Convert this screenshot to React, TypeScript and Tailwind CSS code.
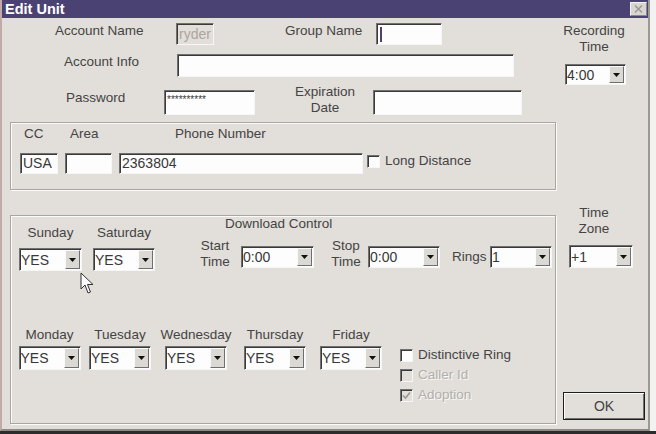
import React from 'react'

const sunken =
	'border border-t-[#707070] border-l-[#707070] border-b-[#f6f6f6] border-r-[#f6f6f6] shadow-[inset_1px_1px_0_#3a3a3a]'

function TextBox({ w, h, value, disabled, caret, small }: { w: string; h: string; value?: string; disabled?: boolean; caret?: boolean; small?: boolean }) {
	return (
		<div
			className={`${w} ${h} ${sunken} ${disabled ? 'bg-[#e2ded9] text-[#aaa6a2]' : 'bg-[#fdfdfd] text-[#383838]'} flex items-center pl-[2px] ${small ? 'text-[10px] leading-none pb-[6px]' : 'text-[14px]'}`}
		>
			{caret && <span className="w-[2px] h-[15px] bg-[#4b4274] ml-[1px]" />}
			{value}
		</div>
	)
}

function Select({ w, h, value }: { w: string; h: string; value: string }) {
	return (
		<div className={`${w} ${h} ${sunken} bg-[#fdfdfd] flex shrink-0`}>
			<span className="flex-1 self-center pl-[1px] text-[14px] text-[#383838] leading-none">{value}</span>
			<div className="w-[15px] my-[1px] mr-[1px] bg-[#dcd8d3] border border-t-[#fafafa] border-l-[#fafafa] border-b-[#6e6e6e] border-r-[#6e6e6e] flex items-center justify-center">
				<svg width="7" height="4" viewBox="0 0 7 4">
					<polygon points="0,0 7,0 3.5,4" fill="#111" />
				</svg>
			</div>
		</div>
	)
}

function Check({ checked, disabled }: { checked?: boolean; disabled?: boolean }) {
	return (
		<div className={`w-[13px] h-[13px] shrink-0 ${sunken} ${disabled ? 'bg-[#e2ded9]' : 'bg-[#fdfdfd]'} flex items-center justify-center`}>
			{checked && (
				<svg width="9" height="9" viewBox="0 0 9 9">
					<path d="M1 4.5 L3.5 7 L8 1.5" stroke="#9a9692" strokeWidth="1.6" fill="none" />
				</svg>
			)}
		</div>
	)
}

function DayCol({ label, ml, w }: { label: string; ml: string; w: string }) {
	return (
		<div className={`${ml} ${w} flex flex-col items-center shrink-0`}>
			<span className="leading-[16px] whitespace-nowrap">{label}</span>
			<div className="mt-[3px]">
				<Select w="w-[62px]" h="h-[24px]" value="YES" />
			</div>
		</div>
	)
}

export default function App() {
	return (
		<div className="w-[656px] h-[434px] bg-[#f3f2f0] flex flex-col overflow-hidden font-['Liberation_Sans',Arial,sans-serif] text-[13.5px] text-[#444]">
			<div className="w-[650px] h-[431px] flex flex-col bg-[#e2ded9] border-l-2 border-l-[#c4a9a9] border-r-2 border-r-[#9c9894] border-b-2 border-b-[#8e8a86]">
				{/* title bar */}
				<div className="h-[18px] bg-[#4b4274] flex items-center justify-between pl-[3px] pr-[1px]">
					<span className="text-white font-bold text-[14.5px] leading-none">Edit Unit</span>
					<div className="w-[17px] h-[14px] bg-[#d9d5d1] border border-t-[#f4f4f4] border-l-[#f4f4f4] border-b-[#8a8a8a] border-r-[#8a8a8a] flex items-center justify-center">
						<svg width="9" height="8" viewBox="0 0 9 8">
							<path d="M1 0.5 L8 7.5 M8 0.5 L1 7.5" stroke="#9a9692" strokeWidth="1.4" />
						</svg>
					</div>
				</div>

				<div className="flex-1 flex">
					{/* left side */}
					<div className="w-[554px] flex flex-col">
						<div className="mt-[5px] flex items-start h-[22px]">
							<span className="ml-[53px] w-[121px] leading-[16px]">Account Name</span>
							<TextBox w="w-[38px]" h="h-[22px]" value="ryder" disabled />
							<span className="ml-[71px] w-[91px] leading-[16px]">Group Name</span>
							<TextBox w="w-[66px]" h="h-[22px]" caret />
						</div>

						<div className="mt-[9px] flex items-start h-[23px]">
							<span className="ml-[62px] w-[113px] leading-[15px]">Account Info</span>
							<TextBox w="w-[337px]" h="h-[23px]" />
						</div>

						<div className="mt-[13px] flex items-start h-[25px]">
							<span className="ml-[64px] w-[98px] leading-[16px]">Password</span>
							<TextBox w="w-[91px]" h="h-[25px]" value="**********" small />
							<span className="ml-[35px] w-[70px] mt-[-6px] leading-[16px] text-center">
								Expiration
								<br />
								Date
							</span>
							<div className="ml-[13px]">
								<TextBox w="w-[149px]" h="h-[25px]" />
							</div>
						</div>

						{/* phone group */}
						<div className="mt-[7px] ml-[8px] w-[546px] h-[68px] border border-[#a9a5a0] shadow-[inset_1px_1px_0_#fbfbfb,1px_1px_0_#fbfbfb] flex flex-col">
							<div className="mt-[3px] flex leading-[16px]">
								<span className="ml-[13px] w-[46px]">CC</span>
								<span className="w-[105px]">Area</span>
								<span>Phone Number</span>
							</div>
							<div className="mt-[11px] flex items-center">
								<div className="ml-[9px]">
									<TextBox w="w-[38px]" h="h-[21px]" value="USA" />
								</div>
								<div className="ml-[7px]">
									<TextBox w="w-[47px]" h="h-[21px]" />
								</div>
								<div className="ml-[7px]">
									<TextBox w="w-[244px]" h="h-[21px]" value="2363804" />
								</div>
								<div className="ml-[4px] mt-[-4px]">
									<Check />
								</div>
								<span className="ml-[5px] mt-[-4px]">Long Distance</span>
							</div>
						</div>

						{/* schedule group */}
						<div className="relative mt-[25px] ml-[8px] w-[546px] h-[209px] border border-[#a9a5a0] shadow-[inset_1px_1px_0_#fbfbfb,1px_1px_0_#fbfbfb] flex flex-col">
							<div className="flex items-start">
								<div className="ml-[8px] w-[63px] mt-[9px] flex flex-col items-center">
									<span className="leading-[16px]">Sunday</span>
									<div className="mt-[7px]">
										<Select w="w-[63px]" h="h-[23px]" value="YES" />
									</div>
								</div>
								<div className="ml-[11px] w-[62px] mt-[9px] flex flex-col items-center">
									<span className="leading-[16px]">Saturday</span>
									<div className="mt-[7px]">
										<Select w="w-[62px]" h="h-[23px]" value="YES" />
									</div>
								</div>
								<div className="flex flex-col">
									<span className="ml-[70px] leading-[16px]">Download Control</span>
									<div className="mt-[6px] flex items-start">
										<span className="ml-[42px] w-[36px] text-center leading-[16px]">
											Start
											<br />
											Time
										</span>
										<div className="ml-[8px] mt-[8px]">
											<Select w="w-[73px]" h="h-[22px]" value="0:00" />
										</div>
										<span className="ml-[15px] w-[34px] text-center leading-[16px]">
											Stop
											<br />
											Time
										</span>
										<div className="ml-[5px] mt-[8px]">
											<Select w="w-[72px]" h="h-[22px]" value="0:00" />
										</div>
										<span className="ml-[12px] w-[38px] mt-[11px] leading-[16px]">Rings</span>
										<div className="mt-[8px]">
											<Select w="w-[62px]" h="h-[22px]" value="1" />
										</div>
									</div>
								</div>
							</div>

							<div className="mt-[56px] flex items-start">
								<DayCol label="Monday" ml="ml-[7px]" w="w-[63px]" />
								<DayCol label="Tuesday" ml="ml-[8px]" w="w-[62px]" />
								<DayCol label="Wednesday" ml="ml-[14px]" w="w-[62px]" />
								<DayCol label="Thursday" ml="ml-[17px]" w="w-[62px]" />
								<DayCol label="Friday" ml="ml-[14px]" w="w-[62px]" />
								<div className="ml-[18px] mt-[18px] flex flex-col">
									<div className="h-[20px] flex items-center gap-[5px]">
										<Check />
										<span>Distinctive Ring</span>
									</div>
									<div className="h-[20px] flex items-center gap-[5px]">
										<Check disabled />
										<span className="text-[#b2aea9] [text-shadow:1px_1px_0_#fafafa]">Caller Id</span>
									</div>
									<div className="h-[20px] flex items-center gap-[5px]">
										<Check checked disabled />
										<span className="text-[#b2aea9] [text-shadow:1px_1px_0_#fafafa]">Adoption</span>
									</div>
								</div>
							</div>

							{/* mouse pointer */}
							<svg className="absolute left-[69px] top-[56px]" width="14" height="23" viewBox="0 0 14 23">
								<path
									d="M1 1 L1 17 L5 13 L8 21 L10.5 20 L7.5 12.5 L13 12.5 Z"
									fill="#fafafa"
									stroke="#333"
									strokeWidth="1"
									strokeLinejoin="round"
								/>
							</svg>
						</div>
					</div>

					{/* right side */}
					<div className="w-[92px] flex flex-col items-start">
						<span className="mt-[5px] ml-[6px] w-[64px] text-center leading-[16px]">
							Recording
							<br />
							Time
						</span>
						<div className="mt-[9px] ml-[9px]">
							<Select w="w-[61px]" h="h-[21px]" value="4:00" />
						</div>
						<span className="mt-[120px] ml-[6px] w-[64px] text-center leading-[16px]">
							Time
							<br />
							Zone
						</span>
						<div className="mt-[8px] ml-[13px]">
							<Select w="w-[64px]" h="h-[23px]" value="+1" />
						</div>
						<button className="mt-[124px] ml-[7px] w-[82px] h-[28px] border border-[#1e1e1e] bg-[#e2ded9] shadow-[inset_1px_1px_0_#fbfbfb,inset_-1px_-1px_0_#6e6e6e] text-[14px] text-[#444]">
							OK
						</button>
					</div>
				</div>
			</div>
			<div className="h-[3px] bg-[#2c2c2c]" />
		</div>
	)
}
